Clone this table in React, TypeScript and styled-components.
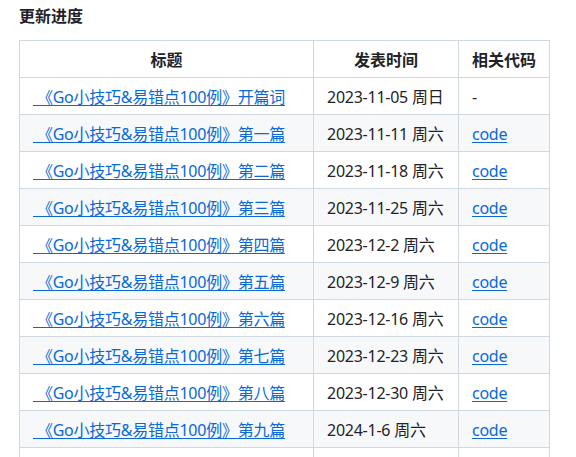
import React from "react";
import styled, { createGlobalStyle } from "styled-components";

const Global = createGlobalStyle`
  html, body { margin: 0; padding: 0; background: #ffffff; }
  body {
    font-family: "Noto Sans", "Noto Sans CJK SC", sans-serif;
    color: #1f2328;
    font-size: 16px;
    line-height: 1.5;
  }
`;

const Page = styled.div`
  padding: 3px 0 0 19px;
`;

const Heading = styled.h4`
  margin: 0 0 13px 0;
  font-size: 16px;
  font-weight: 700;
  line-height: 24px;
  font-family: "Noto Sans CJK SC", sans-serif;
`;

const Table = styled.table`
  border-collapse: collapse;
  border-spacing: 0;
  table-layout: fixed;
  width: 530px;
  font-family: "Noto Sans", "Noto Sans CJK SC", sans-serif;
`;

const HeadCell = styled.th`
  border: 1px solid #d1d9e0;
  padding: 6px 13px;
  font-weight: 700;
  text-align: center;
  line-height: 24px;
  font-family: "Noto Sans CJK SC", sans-serif;
`;

const Row = styled.tr<{ $alt: boolean }>`
  background: ${(p) => (p.$alt ? "#f6f8fa" : "#ffffff")};
`;

const Cell = styled.td`
  border: 1px solid #d1d9e0;
  padding: 7px 13px 5px 13px;
  line-height: 24px;
  white-space: nowrap;
  letter-spacing: -0.25px;
`;

const Link = styled.a`
  color: #0969da;
  text-decoration: underline;
  text-underline-offset: 2px;
`;

const posts = [
  ["开篇词", "2023-11-05 周日", false],
  ["第一篇", "2023-11-11 周六", true],
  ["第二篇", "2023-11-18 周六", true],
  ["第三篇", "2023-11-25 周六", true],
  ["第四篇", "2023-12-2 周六", true],
  ["第五篇", "2023-12-9 周六", true],
  ["第六篇", "2023-12-16 周六", true],
  ["第七篇", "2023-12-23 周六", true],
  ["第八篇", "2023-12-30 周六", true],
  ["第九篇", "2024-1-6 周六", true],
  ["第十篇", "2024-1-13 周六", true],
] as const;

export default function App() {
  return (
    <>
      <Global />
      <Page>
        <Heading>更新进度</Heading>
        <Table>
          <colgroup>
            <col style={{ width: 294 }} />
            <col style={{ width: 145 }} />
            <col style={{ width: 91 }} />
          </colgroup>
          <thead>
            <tr>
              <HeadCell>标题</HeadCell>
              <HeadCell>发表时间</HeadCell>
              <HeadCell>相关代码</HeadCell>
            </tr>
          </thead>
          <tbody>
            {posts.map(([name, date, code], i) => (
              <Row key={i} $alt={i % 2 === 1}>
                <Cell>
                  <Link href="#">{"\u00a0《Go小技巧&易错点100例》" + name}</Link>
                </Cell>
                <Cell>{date}</Cell>
                <Cell>{code ? <Link href="#">code</Link> : "-"}</Cell>
              </Row>
            ))}
          </tbody>
        </Table>
      </Page>
    </>
  );
}
